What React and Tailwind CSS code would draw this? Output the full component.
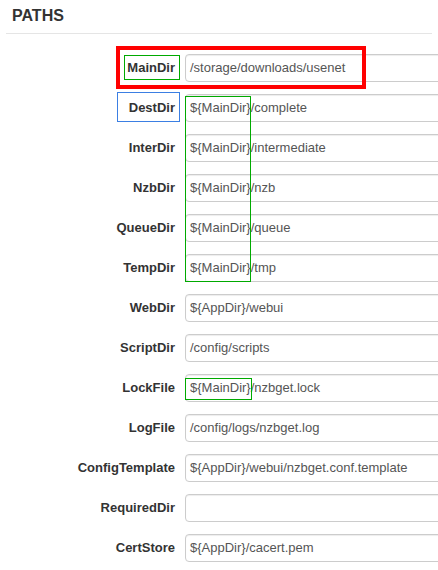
const ROWS = [
  ['MainDir', '/storage/downloads/usenet'],
  ['DestDir', '${MainDir}/complete'],
  ['InterDir', '${MainDir}/intermediate'],
  ['NzbDir', '${MainDir}/nzb'],
  ['QueueDir', '${MainDir}/queue'],
  ['TempDir', '${MainDir}/tmp'],
  ['WebDir', '${AppDir}/webui'],
  ['ScriptDir', '/config/scripts'],
  ['LockFile', '${MainDir}/nzbget.lock'],
  ['LogFile', '/config/logs/nzbget.log'],
  ['ConfigTemplate', '${AppDir}/webui/nzbget.conf.template'],
  ['RequiredDir', ''],
  ['CertStore', '${AppDir}/cacert.pem'],
];

function Row({ label, value }) {
  return (
    <div className="flex items-center h-[28px] mb-[12px]">
      <label className="w-[169px] shrink-0 text-right text-[13px] font-bold text-[#333]">
        {label}
      </label>
      <div className="ml-[10px] w-[300px] shrink-0 h-[28px] border border-[#ccc] rounded-[4px] bg-white shadow-[inset_0_1px_1px_rgba(0,0,0,0.075)] flex items-center px-[4px] text-[13px] text-[#555] whitespace-nowrap">
        {value}
      </div>
    </div>
  );
}

export default function App() {
  return (
    <div
      className="relative w-[438px] h-[570px] overflow-hidden bg-white"
      style={{ fontFamily: '"Liberation Sans", Arial, sans-serif' }}
    >
      <div className="px-[6px]">
        <h3 className="pl-[6px] pt-[7px] pb-[8px] text-[16px] leading-[18px] font-bold text-[#333] border-b border-[#e5e5e5]">
          PATHS
        </h3>
        <div className="pt-[20px]">
          {ROWS.map(([l, v]) => (
            <Row key={l} label={l} value={v} />
          ))}
        </div>
      </div>

      {/* annotation boxes drawn over the form */}
      <div className="absolute left-[116px] top-[46px] w-[250px] h-[43px] border-[4px] border-[#ff0000]" />
      <div className="absolute left-[124px] top-[55px] w-[56px] h-[25px] border border-[#00aa00]" />
      <div className="absolute left-[117px] top-[92px] w-[63px] h-[30px] border border-[#3b7fe3]" />
      <div className="absolute left-[185px] top-[96px] w-[66px] h-[186px] border border-[#00aa00]" />
      <div className="absolute left-[185px] top-[378px] w-[67px] h-[22px] border border-[#00aa00]" />
    </div>
  );
}
